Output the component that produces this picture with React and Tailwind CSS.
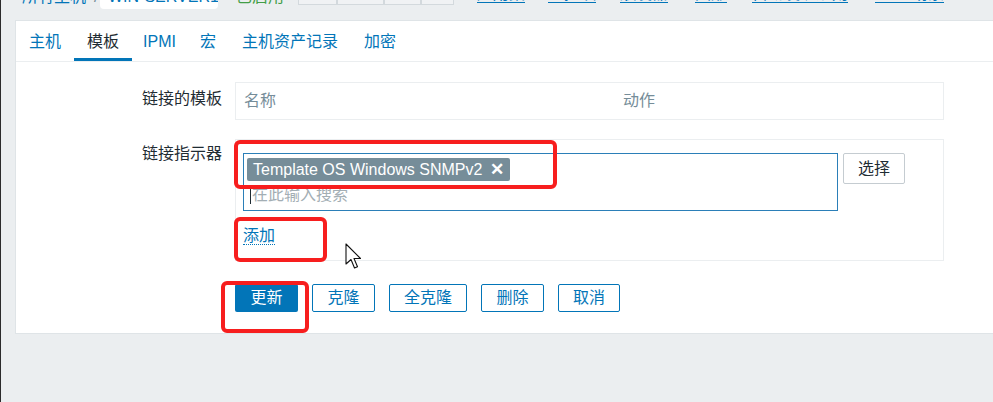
import React from "react";

const tabs = ["主机", "模板", "IPMI", "宏", "主机资产记录", "加密"];

const navLinks = [
  { label: "应用集", w: "w-[71px]" },
  { label: "监控项", w: "w-[72px]" },
  { label: "触发器", w: "w-[75px]" },
  { label: "图形", w: "w-[57px]" },
  { label: "自动发现规则", w: "w-[123px]" },
  { label: "Web 场景", w: "w-[90px]" },
];

const buttons = [
  { label: "克隆", w: "w-[63px]" },
  { label: "全克隆", w: "w-[78px]" },
  { label: "删除", w: "w-[63px]" },
  { label: "取消", w: "w-[62px]" },
];

const Cursor = () => (
  <svg width="20" height="30" viewBox="0 0 20 30" className="absolute left-[345px] top-[243px]">
    <path
      d="M1 1 L1 21 L6 16.5 L9.5 25 L12.5 23.8 L9 15.5 L15.5 15.5 Z"
      fill="white"
      stroke="#111"
      strokeWidth="1.1"
      strokeLinejoin="round"
    />
  </svg>
);

const App = () => {
  return (
    <div className="relative w-[993px] h-[402px] overflow-hidden bg-[#ebeef0] flex font-['Liberation_Sans','Noto_Sans_CJK_SC',sans-serif] text-[16px]">
      <div className="w-[1px] shrink-0 bg-[#2b2b2b]" />
      <div className="flex-1 flex flex-col">
        {/* breadcrumb row, mostly scrolled off the top */}
        <div className="h-[20px] overflow-hidden flex items-start shrink-0">
          <div className="flex items-start -mt-[13px] pl-[21px] leading-[20px] whitespace-nowrap">
            <span className="text-[#0275b8] w-[72px]">所有主机</span>
            <span className="text-[#768d99] w-[6px]">/</span>
            <span className="-mt-[2px] w-[118px] h-[24px] bg-white rounded-sm text-[#0275b8] px-[8px] leading-[23px] overflow-hidden">
              WIN-SERVER12
            </span>
            <span className="ml-[18px] text-[#429e47] w-[62px]">已启用</span>
            <div className="-mt-[6px] flex">
              {["ZBX", "SNMP", "JMX", "IPMI"].map((t, i) => (
                <span
                  key={t}
                  className={`h-[24px] border border-[#d3d9dd] bg-[#f0f2f4] text-[#a0acb3] text-[12px] leading-[22px] px-[6px] ${
                    i === 0 ? "w-[39px]" : i === 1 ? "w-[47px]" : i === 2 ? "w-[37px]" : "w-[33px]"
                  }`}
                >
                  {t}
                </span>
              ))}
            </div>
            <div className="flex ml-[23px] -mt-[3px]">
              {navLinks.map((l) => (
                <span key={l.label} className={`${l.w} text-[#0275b8]`}>
                  <span className="border-b border-[#0275b8]">{l.label}</span>
                </span>
              ))}
            </div>
          </div>
        </div>

        {/* main panel */}
        <div className="ml-[14px] mr-[-4px] bg-white border border-[#dfe4e7] flex flex-col">
          <div className="flex h-[41px] border-b border-[#ebeef0]">
            {tabs.map((t) => (
              <div
                key={t}
                className={`${t === "IPMI" ? "px-[11px]" : "px-[13px]"} pt-[4px] flex items-center border-b-[3px] leading-[20px] ${
                  t === "模板" ? "border-[#0275b8] text-[#1f2c33]" : "border-transparent text-[#0275b8]"
                }`}
              >
                {t}
              </div>
            ))}
          </div>

          {/* linked templates */}
          <div className="flex mt-[20px]">
            <div className="w-[206px] text-right pt-[7px] leading-[20px] text-[#1f2c33]">链接的模板</div>
            <div className="ml-[13px] w-[709px] h-[38px] border border-[#ebeef0] flex items-center pl-[8px] text-[#768d99] leading-[20px]">
              <span className="w-[379px]">名称</span>
              <span>动作</span>
            </div>
          </div>

          {/* link new templates */}
          <div className="flex mt-[19px]">
            <div className="w-[206px] text-right pt-[5px] leading-[20px] text-[#1f2c33]">链接指示器</div>
            <div className="ml-[13px] w-[709px] h-[122px] border border-[#ebeef0] pl-[7px] pt-[13px] flex flex-col">
              <div className="flex items-start">
                <div className="w-[595px] h-[58px] border border-[#2b7fb8] flex flex-col pl-[3px] pt-[4px]">
                  <div className="self-start h-[23px] bg-[#768d99] rounded-[2px] text-white flex items-center pl-[6px] pr-[6px] leading-[20px]">
                    <span>Template OS Windows SNMPv2</span>
                    <span className="ml-[8px] font-bold text-[17px]">✕</span>
                  </div>
                  <div className="flex items-center mt-[4px] pl-[3px] leading-[20px] text-[#a3aeb4]">
                    <span className="w-[1px] h-[17px] bg-[#1f2c33] mr-[1px]" />
                    在此输入搜索
                  </div>
                </div>
                <div className="ml-[5px] w-[62px] h-[31px] border border-[#c5ccd1] rounded-[2px] flex items-center justify-center text-[#1f2c33] leading-[20px]">
                  选择
                </div>
              </div>
              <div className="mt-[15px] leading-[20px]">
                <span className="text-[#0275b8] border-b border-dotted border-[#0275b8]">添加</span>
              </div>
            </div>
          </div>

          {/* action buttons */}
          <div className="flex mt-[23px] mb-[21px] pl-[219px] gap-[14px]">
            <div className="w-[63px] h-[28px] bg-[#0275b8] rounded-[2px] text-white flex items-center justify-center leading-[20px]">
              更新
            </div>
            {buttons.map((b) => (
              <div
                key={b.label}
                className={`${b.w} h-[28px] border border-[#0275b8] rounded-[2px] text-[#0275b8] flex items-center justify-center leading-[20px]`}
              >
                {b.label}
              </div>
            ))}
          </div>
        </div>
      </div>

      {/* red annotation frames */}
      <div className="absolute left-[234px] top-[140px] w-[323px] h-[49px] border-[4px] border-[#f71e1e] rounded-[6px]" />
      <div className="absolute left-[234px] top-[217px] w-[93px] h-[45px] border-[4px] border-[#f71e1e] rounded-[6px]" />
      <div className="absolute left-[221px] top-[281px] w-[88px] h-[52px] border-[4px] border-[#f71e1e] rounded-[6px]" />

      <Cursor />
    </div>
  );
};

export default App;
